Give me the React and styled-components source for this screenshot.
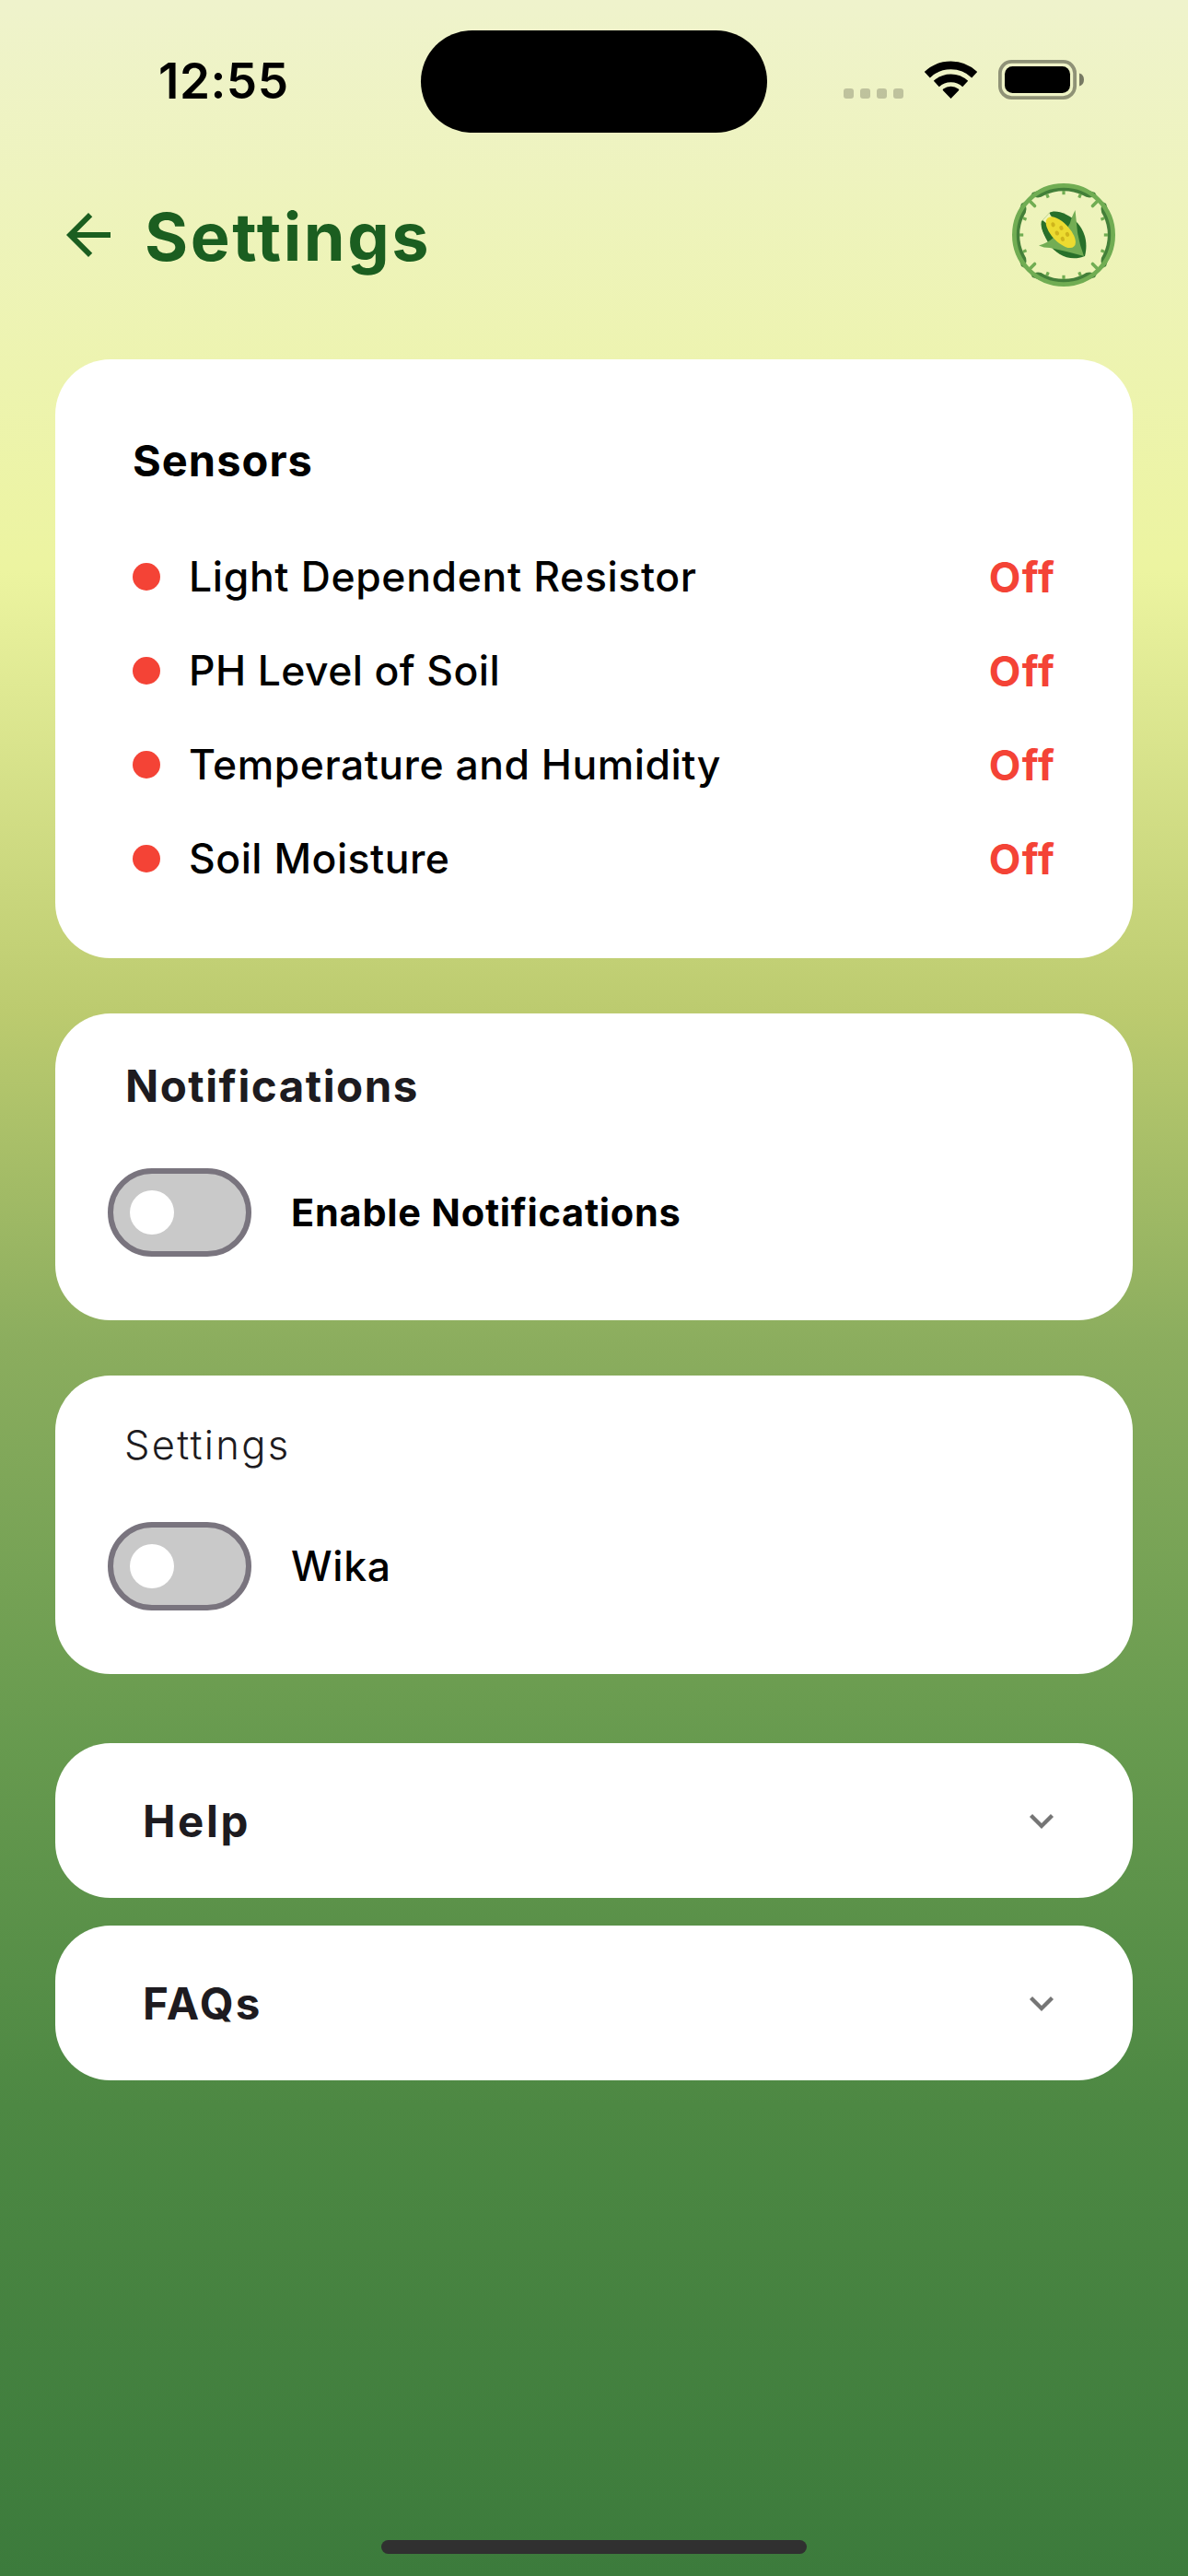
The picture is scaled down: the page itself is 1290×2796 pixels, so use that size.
import React, { useState } from "react";
import styled, { createGlobalStyle } from "styled-components";

const GlobalStyle = createGlobalStyle`
  *, *::before, *::after { box-sizing: border-box; }
  body { margin: 0; }
`;

const Screen = styled.div`
  width: 1290px;
  height: 2796px;
  display: flex;
  flex-direction: column;
  overflow: hidden;
  font-family: Inter, "Liberation Sans", sans-serif;
  color: #000;
  background: linear-gradient(
    180deg,
    #eff3cc 0px,
    #ecf4a0 620px,
    #bccb6f 1098px,
    #8bad5e 1460px,
    #6a9c50 1850px,
    #4d8843 2285px,
    #3c7b3c 2796px
  );
`;

const StatusBar = styled.header`
  display: grid;
  grid-template-columns: 457px 376px 1fr;
  height: 180px;
  padding-top: 33px;
  align-items: start;
`;

const Clock = styled.time`
  padding-left: 172px;
  font-size: 53px;
  font-weight: 600;
  line-height: 111px;
  letter-spacing: 0.5px;
`;

const Island = styled.div`
  height: 111px;
  border-radius: 56px;
  background: #000;
`;

const StatusIcons = styled.div`
  display: flex;
  padding: 32px 0 0 83px;
`;

const TitleBar = styled.div`
  display: flex;
  align-items: center;
  height: 150px;
  padding: 0 78px 0 60px;
`;

const BackButton = styled.button`
  display: flex;
  width: 72px;
  height: 72px;
  padding: 0;
  border: 0;
  background: none;
`;

const Title = styled.h1`
  flex: 1;
  margin: 4px 0 0 25px;
  color: #1b5e20;
  font-size: 72px;
  font-weight: 700;
  line-height: 84px;
  letter-spacing: 2.6px;
`;

const Content = styled.main`
  display: flex;
  flex-direction: column;
  gap: 60px;
  padding: 60px 60px 0;
`;

const Card = styled.section`
  height: ${(p) => p.$height}px;
  border-radius: 60px;
  background: #fff;
`;

const SensorCard = styled(Card)`
  padding: 82px 84px 0;
`;

const SensorTitle = styled.h2`
  margin: 0 0 47px;
  font-size: 47px;
  font-weight: 700;
  line-height: 56px;
  letter-spacing: 1.05px;
`;

const SensorList = styled.ul`
  margin: 0;
  padding: 0;
  list-style: none;
`;

const SensorRow = styled.li`
  display: flex;
  align-items: center;
  height: 102px;
  font-size: 44.5px;
  font-weight: 500;
`;

const Dot = styled.span`
  width: 30px;
  height: 30px;
  border-radius: 50%;
  background: #f44336;
`;

const SensorName = styled.span`
  flex: 1;
  margin-left: 31px;
  letter-spacing: ${(p) => p.$spacing}px;
`;

const SensorState = styled.span`
  color: #f44336;
  font-size: 45px;
  font-weight: 700;
  letter-spacing: 1.2px;
`;

const ToggleCard = styled(Card)`
  padding: ${(p) => p.$top}px 57px 0;
`;

const CardTitle = styled.h2`
  margin: 0 0 0 ${(p) => p.$inset}px;
  color: #1d1b20;
  font-size: ${(p) => (p.$light ? 43.5 : 47.5)}px;
  font-weight: ${(p) => (p.$light ? 300 : 700)};
  line-height: 56px;
  letter-spacing: ${(p) => p.$spacing}px;
`;

const ToggleRow = styled.label`
  display: flex;
  align-items: center;
  gap: 43px;
  margin-top: ${(p) => p.$gap}px;
`;

const Track = styled.button`
  display: flex;
  align-items: center;
  width: 156px;
  height: 96px;
  padding: 0 18px;
  border: 6px solid #79747e;
  border-radius: 48px;
  background: #c9c9c9;
  justify-content: ${(p) => (p.$on ? "flex-end" : "flex-start")};
`;

const Thumb = styled.span`
  width: 48px;
  height: 48px;
  border-radius: 50%;
  background: #fff;
`;

const ToggleLabel = styled.span`
  font-size: ${(p) => p.$size}px;
  font-weight: ${(p) => p.$weight};
  letter-spacing: ${(p) => p.$spacing}px;
`;

const Accordions = styled.div`
  display: flex;
  flex-direction: column;
  gap: 30px;
  padding-top: 15px;
`;

const AccordionHead = styled(Card)`
  display: flex;
  align-items: center;
  justify-content: space-between;
  padding: 2px 81px 0 94px;
`;

const Footer = styled.footer`
  display: flex;
  justify-content: center;
  margin-top: auto;
  padding-bottom: 24px;
`;

const HomeBar = styled.div`
  width: 462px;
  height: 15px;
  border-radius: 8px;
  background: #303030;
`;

function StatusGlyphs() {
  return (
    <svg width="262" height="43" viewBox="0 0 262 43" aria-hidden="true">
      <g fill="#000" fillOpacity="0.2">
        {[0, 18, 36, 54].map((x) => (
          <rect key={x} x={x} y="31" width="11" height="11" rx="3" />
        ))}
      </g>
      <g fill="none" stroke="#000" strokeWidth="8.8">
        <path d="M90.8 16.2a37.2 37.2 0 0 1 51.4 0" />
        <path d="M100.8 26a23 23 0 0 1 31.4 0" />
      </g>
      <path d="M108 33.2q-.9-1 .3-1.8a14 14 0 0 1 16.4 0q1.2.8.3 1.8L116.5 42z" />
      <rect x="169.9" y="1.9" width="81.2" height="39.2" rx="12.5" fill="none" stroke="#000" strokeOpacity="0.4" strokeWidth="3.8" />
      <rect x="175" y="7" width="71" height="29" rx="8.5" />
      <path d="M256 14.5q5 1.5 5 7t-5 7z" fillOpacity="0.5" />
    </svg>
  );
}

function BackArrow() {
  return (
    <svg width="72" height="72" viewBox="0 0 24 24" fill="#1b5e20" aria-hidden="true">
      <path d="M20 11H7.83l5.59-5.59L12 4l-8 8 8 8 1.41-1.41L7.83 13H20z" />
    </svg>
  );
}

const dialTicks = Array.from({ length: 16 }, (_, i) => i);

function CornLogo() {
  return (
    <svg width="114" height="114" viewBox="-57 -57 114 114" aria-hidden="true">
      {[0, 90, 180, 270].map((a) => (
        <path
          key={a}
          transform={`rotate(${a})`}
          fill="#437f39"
          d="M-31-41Q-26-39.5-21-43A47.8 47.8 0 0 1 21-43Q26-39.5 31-41L36-42 34-46 18-51 0-54-18-51-34-46-36-42z"
        />
      ))}
      <circle r="53.6" fill="none" stroke="#71ad53" strokeWidth="4.8" />
      {dialTicks.map((i) => {
        const diagonal = i % 4 === 2;
        return (
          <path
            key={i}
            transform={`rotate(${i * 22.5})`}
            d={diagonal ? "M0-53V-44.500" : "M0-48V-43.800"}
            stroke="#71ad53"
            strokeWidth={diagonal ? 3.6 : 3.2}
            strokeLinecap={diagonal ? "round" : "butt"}
          />
        );
      })}
      <path d="M-15.5-24C-10-28 5-24 15-13C22-5 27 7 23 23C8 29-8 23-17 8C-24-4-25-12-23-16Z" fill="#28702a" />
      <path d="M-24-15.5Q-20-15-18-8L-15 5-19 3Q-26-7-24-15.5z" fill="#28702a" />
      <path d="M-15.500-24Q-15-21-11-18L-18-12-23-16" fill="#eef4b8" />
      <path d="M12.5-27Q8-18 7-13L-3 5-11 3Q-18 9-27 11.5Q-22 14-15 14L3 18 22 23Q17 10 15-3z" fill="#73ad54" />
      <ellipse cx="-3.2" cy="-2.8" rx="21" ry="10" transform="rotate(47 -3.2 -2.8)" fill="#ecdb30" />
      <g fill="#cfb51c">
        {[[-11.5, -11.2], [-2.6, -7.6], [-7.2, -2], [4, -0.6], [-1.2, 4.4]].map(([x, y]) => (
          <ellipse key={x} cx={x} cy={y} rx="2.1" ry="2.6" transform={`rotate(-20 ${x} ${y})`} />
        ))}
      </g>
    </svg>
  );
}

function Chevron() {
  return (
    <svg width="36" height="36" viewBox="0 0 36 36" aria-hidden="true">
      <path d="M6.5 11.5L18 23l11.5-11.5" fill="none" stroke="#757575" strokeWidth="4.3" />
    </svg>
  );
}

function Toggle({ label, gap, size, weight, spacing }) {
  const [on, setOn] = useState(false);
  return (
    <ToggleRow $gap={gap}>
      <Track type="button" role="switch" aria-checked={on} $on={on} onClick={() => setOn(!on)}>
        <Thumb />
      </Track>
      <ToggleLabel $size={size} $weight={weight} $spacing={spacing}>{label}</ToggleLabel>
    </ToggleRow>
  );
}

const sensors = [
  { name: "Light Dependent Resistor", spacing: 0.65 },
  { name: "PH Level of Soil", spacing: 0.4 },
  { name: "Temperature and Humidity", spacing: 0.5 },
  { name: "Soil Moisture", spacing: 0.5 },
];

export default function App() {
  return (
    <Screen>
      <GlobalStyle />
      <StatusBar>
        <Clock>12:55</Clock>
        <Island />
        <StatusIcons>
          <StatusGlyphs />
        </StatusIcons>
      </StatusBar>
      <TitleBar>
        <BackButton aria-label="Back">
          <BackArrow />
        </BackButton>
        <Title>Settings</Title>
        <CornLogo />
      </TitleBar>
      <Content>
        <SensorCard $height={649.5}>
          <SensorTitle>Sensors</SensorTitle>
          <SensorList>
            {sensors.map((s) => (
              <SensorRow key={s.name}>
                <Dot />
                <SensorName $spacing={s.spacing}>{s.name}</SensorName>
                <SensorState>Off</SensorState>
              </SensorRow>
            ))}
          </SensorList>
        </SensorCard>
        <ToggleCard $height={333} $top={51}>
          <CardTitle $inset={19} $spacing={1.5}>Notifications</CardTitle>
          <Toggle label="Enable Notifications" gap={61} size={41.5} weight={700} spacing={0.75} />
        </ToggleCard>
        <ToggleCard $height={324} $top={47}>
          <CardTitle $light $inset={18} $spacing={2.3}>Settings</CardTitle>
          <Toggle label="Wika" gap={56} size={44.5} weight={500} spacing={0.7} />
        </ToggleCard>
        <Accordions>
          <AccordionHead $height={168}>
            <CardTitle $inset={1} $spacing={2.6}>Help</CardTitle>
            <Chevron />
          </AccordionHead>
          <AccordionHead $height={168}>
            <CardTitle $inset={1} $spacing={2.3}>FAQs</CardTitle>
            <Chevron />
          </AccordionHead>
        </Accordions>
      </Content>
      <Footer>
        <HomeBar />
      </Footer>
    </Screen>
  );
}
